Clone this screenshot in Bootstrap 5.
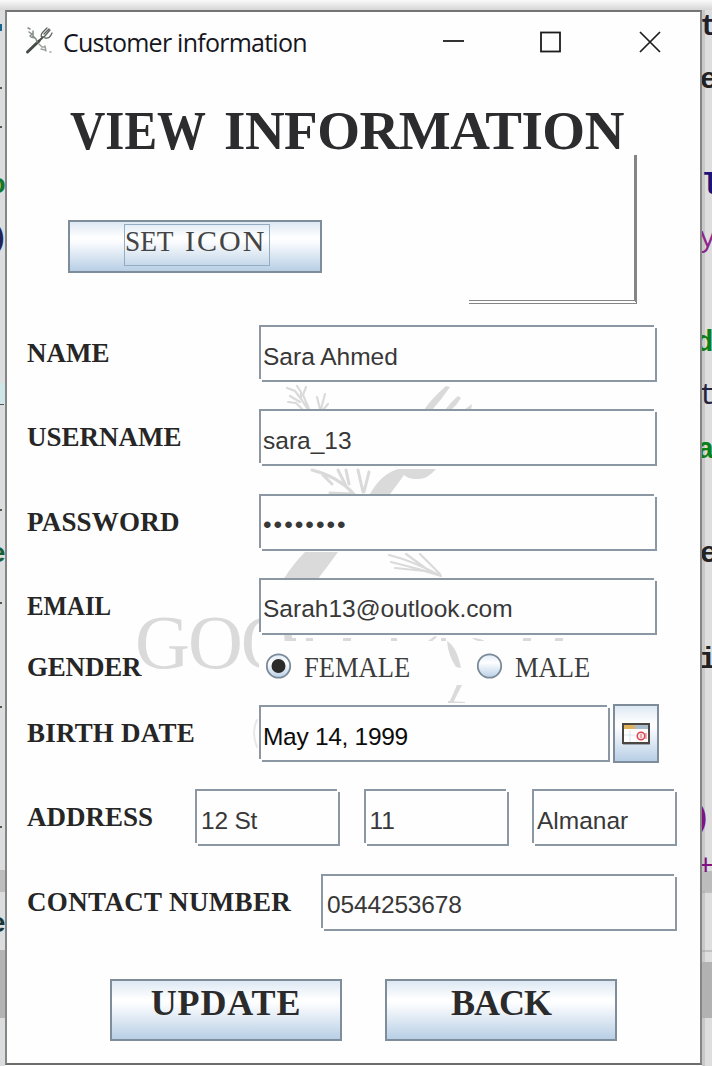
<!DOCTYPE html>
<html lang="en">
<head>
<meta charset="utf-8">
<title>Customer information</title>
<link rel="stylesheet" href="https://cdn.jsdelivr.net/npm/bootstrap@5.3.0/dist/css/bootstrap.min.css">
<script src="https://cdn.jsdelivr.net/npm/bootstrap@5.3.0/dist/js/bootstrap.bundle.min.js"></script>
<style>
  html, body { height: 1066px; overflow: hidden; }
  body { background: #fff; font-family: "Liberation Sans", sans-serif; color: #333; line-height: 1; }
  .topshade { height: 10px; background: linear-gradient(#fafafa, #d6d6d6); }
  .strip { display: block; flex: none; }
  .win { width: 697px; height: 1055px; border: 2px solid #858585; border-top-color: #757575; border-bottom-color: #6c6c6c; background: #fefefe; position: relative; }
  .titlebar { height: 60px; padding-left: 17px; }
  .titlebar .caption { font: 25px/1 "Open Sans", sans-serif; color: #161622; letter-spacing: -.75px; margin-left: 10px; }
  .serif { font-family: "Liberation Serif", serif; }
  .squeeze { display: inline-block; transform-origin: 0 50%; }
  .heading { font-size: 55px; font-weight: 700; color: #2c2c2e; height: 83px; padding: 26px 0 0 63px; white-space: nowrap; }
  .heading .w1 { width: 154px; transform: scaleX(.89); }
  .heading .w2 { letter-spacing: -.5px; }
  .picrow { height: 168px; padding: 0 63px 0 61px; }
  .metal { border: 2px solid #7f8d9b; border-radius: 0; padding: 0; color: #2b2b2b; line-height: 1;
    background: linear-gradient(#dde8f3 0%, #fff 32%, #fbfcfe 40%, #b8cfe5 100%); }
  .metal:hover { border-color: #7f8d9b; }
  .seticon { width: 254px; height: 53px; margin-top: 65px; font-size: 30px; color: #444; }
  .seticon .focus { display: block; width: 146px; height: 42px; border: 1px solid #94abc4; margin: -3px 0 0 54px; padding-top: 1px; white-space: nowrap; text-align: left; }
  .frame { width: 168px; height: 149px; border-right: 3px solid #858585; border-bottom: 4px double #858585; }
  .rows { padding: 0 22px 0 20px; position: relative; }
  .frow { height: 57px; margin-bottom: 27.3px; }
  .lab { font-family: "Liberation Serif", serif; font-weight: 700; font-size: 27px; color: #262626; white-space: nowrap; }
  .w-main { width: 232px; flex: none; }
  .fld { position: relative; height: 57px; background: #fefefe; border: 2px solid #8b97a2; }
  .fld::before, .fld::after { content: ""; position: absolute; width: 3px; height: 3px; background: #fefefe; }
  .fld::before { left: -2px; bottom: -2px; }
  .fld::after { right: -2px; top: -2px; }
  .fld .form-control { border: 0; border-radius: 0; background: none; height: 100%; padding: 6px 0 0 2px; font-size: 24.5px; line-height: 1; color: #383838; }
  .fld398 { width: 398px; } .fld145 { width: 145px; } .fld351 { width: 351px; } .fld356 { width: 356px; }
  .grow0 { height: 43px; margin-top: -21px; margin-bottom: 21px; }
  .opt { background: #fefefe; height: 54px; font-size: 30px; color: #3c3c3c; padding-bottom: 3px; }
  .opt .squeeze { margin-left: 12px; transform: scaleX(.885); }
  .mark-bg { position: absolute; left: 0; top: 0; }
</style>
</head>
<body>
<div class="topshade"></div>
<div class="d-flex">
  <svg class="strip" width="5" height="1056" viewBox="0 10 5 1056">
    <rect y="10" width="5" height="1056" fill="#dcdddf"/>
    <rect y="383" width="5" height="22" fill="#cfe6e8"/>
    <rect y="870" width="5" height="22" fill="#bdbdbd"/>
    <rect y="950" width="5" height="68" fill="#b4b4b4"/>
    <g font-family="Liberation Mono, monospace" font-size="28" font-weight="700">
      <rect y="24" width="2" height="7" fill="#15658f"/>
      <text x="-11" y="193" fill="#11772b">o</text>
      <text x="-9" y="246" fill="#23235a">)</text>
      <text x="-11" y="562" fill="#16603a">e</text>
      <text x="-11" y="932" fill="#173838">e</text>
    </g>
    <g fill="#555"><rect y="87" width="2" height="2"/><rect y="126" width="2" height="2"/><rect y="404" width="4" height="1"/><rect y="509" width="2" height="2"/><rect y="602" width="2" height="2"/><rect y="706" width="2" height="2"/><rect y="826" width="2" height="2"/></g>
  </svg>

  <main class="win">
    <svg class="mark-bg" width="693" height="1051" viewBox="7 12 693 1051" fill="none" stroke="#dadada" stroke-linecap="round">
      <text x="135" y="668" font-family="Liberation Serif, serif" font-size="76" letter-spacing="-2" fill="#dadada" stroke="none">GOO</text>
      <g stroke-width="2.2">
        <path d="M287 388l8 3 6 8 8 12M297 386l4 6 0 7M288 402l8 1 8 8M290 396l10 6M306 387l-3 8 6 14M317 397l3 12M325 394l-4 15M328 404l-5 6"/>
        <path d="M312 470q25 6 42 24M322 474l10 10M338 470l8 16M346 470l3 14M330 493l22 1M358 470l5 22M369 472l-5 20" stroke-width="3"/>
        <path d="M389 555q24 6 52 21M391 562q26 6 50 14M406 554l22 16M420 554l20 20M395 568l30 3"/>
      </g>
      <g fill="#dadada" stroke="none">
        <path d="M424 410q8-12 22-24l4 1q-8 12-18 23zM445 410q6-8 13-14l3 2q-4 7-10 12zM464 410l8-6-1 6z"/>
        <path d="M370 494q11-20 28-25h38q-9 11-20 10-8 0-12-4-7 10-14 19z"/>
        <path d="M305 552h33q-10 14-21 28h-34q10-16 22-28z"/>
        <path d="M457 685h5l-9 18h-4zM448 701l17 1v1h-17z"/>
        <path d="M447 641q10 6 14 27l-5-1q-8-12-9-26zM428 641l7-5 2 1-6 5zM472 638q9 0 14 4-9 0-14-4z"/>
        <path d="M288 638h8v3h-8zM306 638h7v3h-7zM343 638h8v3h-8zM391 638h6v3h-6zM441 638h5v3h-5zM523 638h8v3h-8zM555 638h8v3h-8z"/>
      </g>
      <path d="M257 720q-6 12 0 27" stroke-width="2" stroke="#e8e8e8"/>
    </svg>

    <div class="position-relative">
      <header class="titlebar d-flex align-items-center">
        <svg width="29" height="32" viewBox="0 0 29 32" fill="none" stroke="#454b46" stroke-linecap="round">
          <path d="M3.500 26L15 15" stroke-width="3"/><path d="M15 15L19 11" stroke-width="2"/>
          <path d="M18 12q-2-3 1-6l4-4M20 11l6-7M21 12q4 1 6-3l1-2M20 8l5-5" stroke-width="1.3" stroke="#5d635e"/>
          <path d="M4 2l2 1M5 6l3 2-2 2M9 5l0 5 3 3M7 11l4 1M12 13l1 3" stroke="#848d86" stroke-width="1.5"/>
          <path d="M15 18l3 3 3 0M17 23l4 1M21 20l1 5M26 26l1 0" stroke="#99a19b" stroke-width="1.4"/>
        </svg>
        <span class="caption">Customer information</span>
        <svg class="ms-auto" style="margin-right:36px" width="222" height="24" viewBox="0 0 222 24" fill="none" stroke="#1c1c1c" stroke-width="1.8">
          <path d="M1 11h21"/><rect x="99" y="2.500" width="19" height="19"/><path d="M198 2l20 20M218 2l-20 20" stroke-width="1.7"/>
        </svg>
      </header>

      <h1 class="heading serif m-0"><span class="w1 squeeze">VIEW</span><span class="w2">INFORMATION</span></h1>

      <div class="picrow d-flex justify-content-between align-items-start">
        <button class="btn metal seticon serif"><span class="focus"><span class="squeeze" style="transform:scaleX(.91);width:60px">SET</span><span style="letter-spacing:2px">ICON</span></span></button>
        <div class="frame"></div>
      </div>

      <form class="rows">
        <div class="frow d-flex align-items-center" style="margin-top:2px">
          <label class="lab w-main">NAME</label>
          <div class="fld fld398"><input class="form-control" value="Sara Ahmed"></div>
        </div>
        <div class="frow d-flex align-items-center">
          <label class="lab w-main">USERNAME</label>
          <div class="fld fld398"><input class="form-control" value="sara_13"></div>
        </div>
        <div class="frow d-flex align-items-center">
          <label class="lab w-main" style="letter-spacing:.2px">PASSWORD</label>
          <div class="fld fld398"><input class="form-control" style="letter-spacing:2px" value="••••••••"></div>
        </div>
        <div class="frow d-flex align-items-center">
          <label class="lab w-main"><span class="squeeze" style="transform:scaleX(.92)">EMAIL</span></label>
          <div class="fld fld398"><input class="form-control" value="Sarah13@outlook.com"></div>
        </div>
        <div class="grow0 d-flex align-items-start">
          <label class="lab w-main" style="letter-spacing:-.2px;padding-top:13px">GENDER</label>
          <div class="opt serif d-flex align-items-center" style="width:188px;padding-left:6px">
            <svg width="27" height="27" viewBox="0 0 27 27"><defs><linearGradient id="rg" x1="0" y1="0" x2="0" y2="1"><stop offset="0" stop-color="#dde8f3"/><stop offset=".35" stop-color="#fff"/><stop offset="1" stop-color="#b8cfe5"/></linearGradient></defs><circle cx="13.500" cy="13" r="11.700" fill="url(#rg)" stroke="#7a8a99" stroke-width="1.8"/><circle cx="13.500" cy="13" r="7" fill="#2b2b2b"/></svg>
            <span class="squeeze">FEMALE</span>
          </div>
          <div class="opt serif d-flex align-items-center" style="width:180px;margin-left:22px;padding-left:7px">
            <svg width="27" height="27" viewBox="0 0 27 27"><circle cx="13.500" cy="13" r="11.700" fill="url(#rg)" stroke="#7a8a99" stroke-width="1.8"/></svg>
            <span class="squeeze">MALE</span>
          </div>
        </div>
        <div class="frow d-flex align-items-center">
          <label class="lab w-main" style="letter-spacing:.2px">BIRTH DATE</label>
          <div class="fld fld351"><input class="form-control" style="color:#0c0c0c;letter-spacing:-.3px" value="May 14, 1999"></div>
          <button type="button" class="btn metal d-flex align-items-center justify-content-center" style="width:46px;height:59px;margin-left:3px">
            <svg width="30" height="24" viewBox="0 0 30 24"><rect x="2" y="21" width="27" height="2" fill="#9ba5ae"/><rect x="2" y="2" width="26" height="19" fill="#fff" stroke="#4a4742" stroke-width="2"/><rect x="3" y="3" width="11" height="4" fill="#e0b15c"/><rect x="14" y="3" width="13" height="4" fill="#a9bccd"/><path d="M9 8v12M3 13h11" stroke="#dbe6ea"/><circle cx="20" cy="14" r="3.800" fill="#fde8e8" stroke="#dc4450" stroke-width="1.5"/><path d="M20 12v4M25 11v6" stroke="#dc6470" stroke-width="1"/></svg>
          </button>
        </div>
        <div class="frow d-flex align-items-center">
          <label class="lab" style="width:168px">ADDRESS</label>
          <div class="d-flex" style="gap:23.5px">
            <div class="fld fld145"><input class="form-control" style="padding-left:4px;letter-spacing:-.2px" value="12 St"></div>
            <div class="fld fld145"><input class="form-control" style="padding-left:4px" value="11"></div>
            <div class="fld fld145"><input class="form-control" style="padding-left:3px" value="Almanar"></div>
          </div>
        </div>
        <div class="frow d-flex align-items-center">
          <label class="lab" style="width:294px;letter-spacing:.35px">CONTACT NUMBER</label>
          <div class="fld fld356"><input class="form-control" style="padding-left:4px;letter-spacing:-.15px" value="0544253678"></div>
        </div>
        <div class="d-flex serif" style="padding:21px 0 0 83px;gap:43px">
          <button type="button" class="btn metal fw-bold" style="width:232px;height:62px;font-size:36px;padding-bottom:14px;letter-spacing:.9px">UPDATE</button>
          <button type="button" class="btn metal fw-bold" style="width:232px;height:62px;font-size:36px;padding-bottom:14px;letter-spacing:-1px">BACK</button>
        </div>
      </form>
    </div>
  </main>

  <svg class="strip" width="10" height="1056" viewBox="702 10 10 1056">
    <rect x="702" y="10" width="10" height="1056" fill="#dedede"/>
    <rect x="702" y="10" width="3" height="1056" fill="#c8c8c8"/>
    <rect x="702" y="871" width="10" height="20" fill="#bcbcbc"/>
    <path d="M702 892h10M702 951h10" stroke="#a2a2a2"/>
    <rect x="702" y="962" width="10" height="56" fill="#b2b2b2"/>
    <g font-family="Liberation Mono, monospace" font-size="29">
      <text x="700" y="35" fill="#20202c" font-weight="700">t</text>
      <text x="700" y="88" fill="#222" font-weight="700">e</text>
      <text x="701" y="194" fill="#1b1375" font-weight="700">l</text>
      <text x="699" y="247" fill="#8e2589">y</text>
      <text x="696" y="351" fill="#0c7f17" font-weight="700">d</text>
      <text x="699" y="404" fill="#23233e">t</text>
      <text x="697" y="458" fill="#0c7f17" font-weight="700">a</text>
      <text x="700" y="562" fill="#222" font-weight="700">e</text>
      <text x="699" y="668" fill="#222" font-weight="700">i</text>
      <text x="693" y="827" fill="#81127f" font-weight="700">)</text>
      <text x="697" y="875" fill="#81127f">+</text>
    </g>
  </svg>
</div>
</body>
</html>
